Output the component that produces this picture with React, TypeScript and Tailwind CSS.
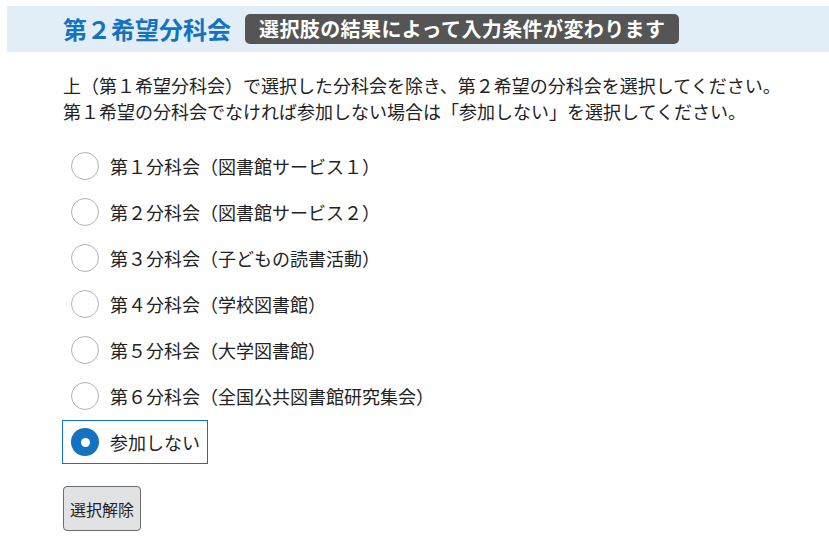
import { useState } from 'react';

const options = [
  '第１分科会（図書館サービス１）',
  '第２分科会（図書館サービス２）',
  '第３分科会（子どもの読書活動）',
  '第４分科会（学校図書館）',
  '第５分科会（大学図書館）',
  '第６分科会（全国公共図書館研究集会）',
  '参加しない',
];

export default function App() {
  const [selected, setSelected] = useState<string | null>('参加しない');

  return (
    <div
      className="min-h-screen bg-white pt-[6px] text-[#222]"
      style={{ fontFamily: '"Noto Sans CJK JP", "Noto Sans", sans-serif' }}
    >
      {/* Heading band */}
      <div className="ml-[7px] flex h-[46px] items-center bg-[#e1eef8] pl-[56px]">
        <h2 className="text-[24px] font-bold leading-none text-[#1572c0]">第２希望分科会</h2>
        <span className="ml-[14px] flex h-[30px] items-center rounded-[5px] bg-[#555555] px-[14px] text-[20px] font-bold leading-none tracking-[0.4px] text-white">
          選択肢の結果によって入力条件が変わります
        </span>
      </div>

      <div className="pl-[63px]">
        <p className="mt-[20px] text-[18px] leading-[26px]">
          上（第１希望分科会）で選択した分科会を除き、第２希望の分科会を選択してください。
          <br />
          第１希望の分科会でなければ参加しない場合は「参加しない」を選択してください。
        </p>

        {/* Options */}
        <div className="mt-[20px] ml-[-1px] flex flex-col items-start gap-[2px]">
          {options.map((o) => {
            const on = selected === o;
            return (
              <label
                key={o}
                onClick={() => setSelected(o)}
                className={`flex h-[44px] cursor-pointer items-center gap-[11px] border py-[7px] pl-[8px] pr-[7px] ${
                  on ? 'border-[#1572c0]' : 'border-transparent'
                }`}
              >
                {on ? (
                  <span className="flex h-[28px] w-[28px] items-center justify-center rounded-full bg-[#1572c0]">
                    <span className="h-[9px] w-[9px] rounded-full bg-white" />
                  </span>
                ) : (
                  <span className="h-[28px] w-[28px] rounded-full border-[1.5px] border-[#b3b3b3] bg-white" />
                )}
                <span className="text-[18px] leading-none">{o}</span>
              </label>
            );
          })}
        </div>

        <button
          type="button"
          onClick={() => setSelected(null)}
          className="mt-[22px] h-[45px] rounded-[4px] border border-[#6b6b6b] bg-[#e1e2e4] px-[6px] text-[16px] text-[#222]"
        >
          選択解除
        </button>
      </div>
    </div>
  );
}
